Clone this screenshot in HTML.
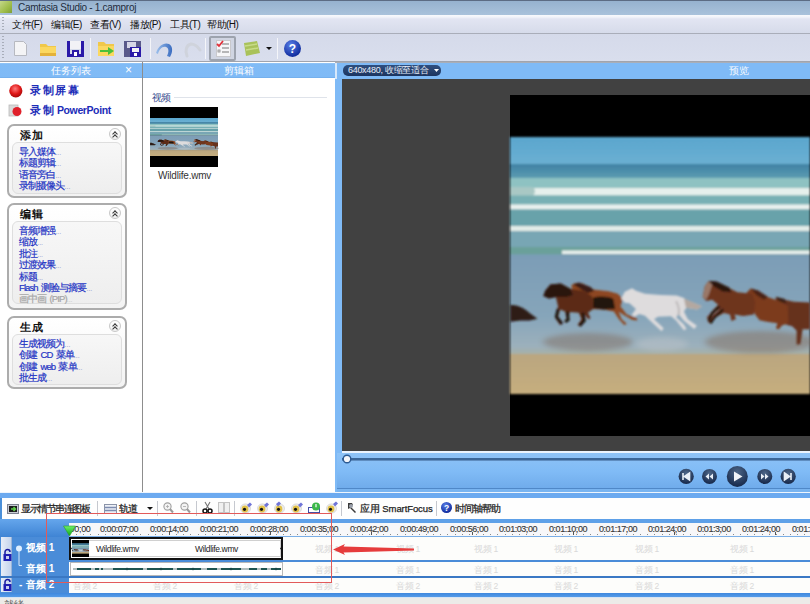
<!DOCTYPE html>
<html><head><meta charset="utf-8">
<style>
*{margin:0;padding:0;box-sizing:border-box}
html,body{width:810px;height:604px;overflow:hidden;background:#d9dde9;font-family:"Liberation Sans",sans-serif;font-size:11px;color:#000}
.a{position:absolute}
svg{position:absolute;overflow:visible}
#title{left:0;top:0;width:810px;height:15px;background:linear-gradient(#5c6c84 0,#5c6c84 1px,#96b2cf 1px,#a9c2db 15px);color:#1e2a3a;font-size:11px}
#menu{left:0;top:15px;width:810px;height:19px;background:linear-gradient(#f8f9fd 0,#f2f4fa 2px,#e2e5f2 4px,#d6dbea 18px);border-bottom:1px solid #a9adb9}
#menu span{position:absolute;top:3px;font-size:10px;color:#111;letter-spacing:-0.5px}
#tool{left:0;top:34px;width:810px;height:28px;background:linear-gradient(#d5daea,#d9deed);border-bottom:1px solid #a0a4ae}
.sep{position:absolute;top:4px;width:1px;height:21px;background:#a9adb8;border-right:1px solid #f4f5f9}
.hdr{position:absolute;top:1px;height:15px;background:linear-gradient(#9ccaf8 0,#80bbf6 1px,#7fbaf6 14px,#6aa6e4 15px);color:#fff;text-align:center;font-size:10px;line-height:15px}
#left{left:0;top:62px;width:143px;height:430px;background:#fff;border-right:1px solid #8d8d8d}
#clip{left:143px;top:62px;width:192px;height:430px;background:#fff}
#prev{left:335px;top:62px;width:475px;height:430px;background:#7fbaf6}
#dark{left:342px;top:79px;width:468px;height:372px;background:#414141}
#tl{left:0;top:492px;width:810px;height:105px;background:#4a8fd9}
.big{position:absolute;font-size:11px;font-weight:bold;color:#1c2cb8;letter-spacing:1.5px;line-height:13px}
.box{position:absolute;left:7px;width:120px;border:2px solid #acacac;border-radius:7px;background:linear-gradient(#fff,#f3f3f3)}
.bt{position:absolute;left:11px;top:3px;font-size:11px;font-weight:bold;letter-spacing:1px;color:#111;line-height:13px}
.btn{position:absolute;left:99.5px;top:2.3px;width:12px;height:12px;border-radius:50%;border:1px solid #c8c8c8;background:linear-gradient(#fff,#f0f0f0)}
.btn:after{content:"";position:absolute;left:3.3px;top:3px;width:3px;height:3px;border-left:1.3px solid #333;border-top:1.3px solid #333;transform:rotate(45deg)}
.btn:before{content:"";position:absolute;left:3.3px;top:5.5px;width:3px;height:3px;border-left:1.3px solid #333;border-top:1.3px solid #333;transform:rotate(45deg)}
.inner{position:absolute;left:3px;top:16px;width:110px;border:1px solid #dedede;border-radius:6px;background:linear-gradient(#f7f7f7,#eeeeee)}
.lk{position:absolute;left:6px;top:3px;font-size:9.5px;line-height:11.4px;color:#2434c4;white-space:nowrap;letter-spacing:-0.9px;word-spacing:1.5px;-webkit-text-stroke:0.2px #2434c4}
.lk i{font-style:normal;font-size:7px;letter-spacing:0;color:#8a92cc;-webkit-text-stroke:0;line-height:1px}
.ruler span{position:absolute;top:523px;font-size:9px;color:#3a3a3a;line-height:12px;letter-spacing:-0.45px;width:60px;text-align:center;-webkit-text-stroke:0.15px #3a3a3a}
.ph span{position:absolute;font-size:8.5px;color:#d9d9d9;line-height:11px;letter-spacing:-0.3px}
.trk{position:absolute;font-size:10px;font-weight:bold;color:#fff;line-height:12px;letter-spacing:0px}
.tt{position:absolute;top:502px;font-size:9.5px;letter-spacing:-0.9px;color:#222;line-height:13px;white-space:nowrap;-webkit-text-stroke:0.25px #222}
.tsep{position:absolute;top:501px;width:1px;height:15px;background:#c5c8cf}
#status{left:0;top:597px;width:810px;height:7px;background:#ecebe8;border-top:1px solid #d6e4f4}
</style></head><body>
<div id="title" class="a">
 <div class="a" style="left:0;top:1px;width:12px;height:12px;background:linear-gradient(135deg,#c5d88a,#9ebd4a 60%,#7f9e36)"></div>
 <div class="a" style="left:18px;top:2px;font-size:10px;letter-spacing:-0.3px;line-height:12px;color:#1f2c3c">Camtasia Studio - 1.camproj</div>
</div>
<div id="menu" class="a">
 <div class="a" style="left:2px;top:2px;width:2px;height:14px;background:repeating-linear-gradient(#a8adb9 0 1px,transparent 1px 3px)"></div>
 <span style="left:12px">文件(F)</span>
 <span style="left:51px">编辑(E)</span>
 <span style="left:90px">查看(V)</span>
 <span style="left:130px">播放(P)</span>
 <span style="left:170px">工具(T)</span>
 <span style="left:207px">帮助(H)</span>
</div>
<div id="tool" class="a">
 <div class="a" style="left:2px;top:2px;width:2px;height:23px;background:repeating-linear-gradient(#a8adb9 0 1px,transparent 1px 3px)"></div>
 <!-- new doc -->
 <svg style="left:13px;top:6px" width="15" height="17"><path d="M1.5 1.5h9l3 3v11h-12z" fill="#f4f4f6" stroke="#b7b9c0"/></svg>
 <!-- folder -->
 <svg style="left:39px;top:7px" width="18" height="16"><path d="M1 3h6l2 2h8v10H1z" fill="#f0c84a"/><path d="M1 6h16v9H1z" fill="#fbd860"/><path d="M1 12h16v3H1z" fill="#e4b23a"/></svg>
 <!-- save -->
 <svg style="left:67px;top:7px" width="17" height="16"><path d="M0 0h3v16H0zM14 0h3v16h-3zM0 13h17v3H0zM5 9h7v7H5z" fill="#2a1aa8"/><rect x="3" y="0" width="11" height="8" fill="#f2f2f6"/><rect x="7" y="11" width="3" height="4" fill="#fff"/></svg>
 <div class="sep" style="left:90px"></div>
 <!-- open arrow folder -->
 <svg style="left:97px;top:7px" width="19" height="16"><path d="M1 1h6l2 2h8v12H1z" fill="#f0c84a"/><path d="M1 5h16v10H1z" fill="#fbd860"/><path d="M3 9h8V6l6 4-6 4v-3H3z" fill="#4cc03a"/></svg>
 <!-- save as -->
 <svg style="left:124px;top:7px" width="18" height="17"><rect x="0" y="0" width="17" height="16" fill="#5a5a8a"/><rect x="3" y="1" width="9" height="6" fill="#d6d6e6"/><rect x="6" y="6" width="11" height="10" fill="#2a1aa8"/><rect x="8" y="7" width="7" height="4" fill="#f2f2f6"/><rect x="10" y="12" width="3" height="3" fill="#fff"/></svg>
 <div class="sep" style="left:150px"></div>
 <!-- undo -->
 <svg style="left:155px;top:8px" width="19" height="16"><defs><linearGradient id="ug" x1="0" y1="0" x2="1" y2="0"><stop offset="0" stop-color="#9cc0ec"/><stop offset="1" stop-color="#3a6cc0"/></linearGradient></defs><path d="M1 11C3 4 9 0 14 2c4 2 4 8 1 13l-3-1c2-4 2-8-1-9-4-1-7 3-8 7z" fill="url(#ug)"/></svg>
 <!-- redo gray -->
 <svg style="left:183px;top:8px" width="19" height="15"><path d="M4 14C2 9 3 3 8 2c4 0 7 3 9 6" fill="none" stroke="#cfd3dc" stroke-width="3" stroke-linecap="round"/></svg>
 <div class="sep" style="left:205px"></div>
 <!-- pressed checklist -->
 <div class="a" style="left:209px;top:2px;width:27px;height:25px;border:2px solid #9da3ae;border-radius:2px;background:#d0d5e2"></div>
 <svg style="left:216px;top:6px" width="15" height="17"><rect x="0.5" y="0.5" width="14" height="16" fill="#f6f6f8" stroke="#c8c8cc"/><path d="M6 4h7M6 8h7M6 12h7" stroke="#777" stroke-width="1"/><path d="M1 4l2 2 4-5" stroke="#e0303a" stroke-width="1.8" fill="none"/><rect x="2" y="10" width="2" height="2" fill="none" stroke="#888" stroke-width=".8"/></svg>
 <!-- green book -->
 <svg style="left:242px;top:7px" width="18" height="15"><path d="M2 2l13-2 3 12-14 3z" fill="#a9c25a"/><path d="M3 5l12-2M4 9l12-2" stroke="#c8dc88" stroke-width="1.5"/></svg>
 <svg style="left:266px;top:13px" width="7" height="4"><path d="M0 0h6l-3 3z" fill="#111"/></svg>
 <div class="sep" style="left:277px"></div>
 <!-- help -->
 <svg style="left:284px;top:6px" width="18" height="18"><defs><radialGradient id="hg" cx="40%" cy="30%" r="70%"><stop offset="0" stop-color="#5a7fe8"/><stop offset="1" stop-color="#0e2a9c"/></radialGradient></defs><circle cx="8.5" cy="8.5" r="8.5" fill="url(#hg)"/><text x="8.5" y="13" text-anchor="middle" font-family="Liberation Sans" font-weight="bold" font-size="12" fill="#fff">?</text></svg>
</div>
<div id="left" class="a"><div class="hdr" style="left:0;width:142px">任务列表<span class="a" style="left:125px;top:0;font-size:12px">×</span></div>
 <svg style="left:9px;top:22px" width="14" height="14"><defs><radialGradient id="rg" cx="45%" cy="35%" r="65%"><stop offset="0" stop-color="#ff7a7a"/><stop offset=".6" stop-color="#e01818"/><stop offset="1" stop-color="#a80808"/></radialGradient></defs><circle cx="6.8" cy="6.8" r="6.6" fill="url(#rg)"/></svg>
 <div class="big" style="left:30px;top:22px">录制屏幕</div>
 <svg style="left:8px;top:42px" width="15" height="13"><rect x="1" y="1" width="9" height="11" fill="#d9d9d9" stroke="#bbb" stroke-width=".8"/><circle cx="9" cy="7.5" r="4.5" fill="#e0202a"/></svg>
 <div class="big" style="left:30px;top:42px">录制<b class="a" style="left:27px;top:0;letter-spacing:-0.4px;font-size:10.5px">PowerPoint</b></div>
 <div class="box" style="top:62px;height:74px"><div class="bt">添加</div><div class="btn"></div>
  <div class="inner" style="height:52px"><div class="lk">导入媒体<i>...</i><br>标题剪辑<i>...</i><br>语音旁白<i>...</i><br>录制摄像头<i>...</i></div></div></div>
 <div class="box" style="top:141px;height:107px"><div class="bt">编辑</div><div class="btn"></div>
  <div class="inner" style="height:83px"><div class="lk">音频增强<i>...</i><br>缩放<i>...</i><br>批注<i>...</i><br>过渡效果<i>...</i><br>标题<i>...</i><br>Flash 测验与摘要<i>...</i><br><span style="color:#a6a6a6;-webkit-text-stroke:0.2px #a6a6a6">画中画 (PIP)<i style="color:#c8c8c8">...</i></span></div></div></div>
 <div class="box" style="top:254px;height:73px"><div class="bt">生成</div><div class="btn"></div>
  <div class="inner" style="height:51px"><div class="lk">生成视频为<i>...</i><br>创建 CD 菜单<i>...</i><br>创建 web 菜单<i>...</i><br>批生成<i>...</i></div></div></div>
</div>
<div id="clip" class="a"><div class="hdr" style="left:0;width:192px">剪辑箱</div>
 <div class="a" style="left:9px;top:30px;font-size:10px;color:#3b4f8f;line-height:12px;letter-spacing:-1px">视频</div>
 <div class="a" style="left:31px;top:35px;width:153px;height:1px;background:#dfe3ea"></div>
 <div class="a" style="left:7px;top:45px;width:68px;height:60px;background:#000"></div><svg style="left:7px;top:56px" width="68" height="38" viewBox="0 0 300 257" preserveAspectRatio="none"><use href="#vid"/></svg>
 <div class="a" style="left:15px;top:108px;font-size:10px;color:#333;line-height:12px;letter-spacing:-0.2px">Wildlife.wmv</div>
</div>
<div id="prev" class="a">
 <div class="a" style="left:0;top:0;width:475px;height:1px;background:#a9aeb8"></div>
 <div class="a" style="left:0;top:1px;width:2px;height:16px;background:#d6e8fb"></div>
 <div class="a" style="left:8px;top:3px;width:98px;height:11px;border-radius:5px;background:linear-gradient(#2f4f7f,#1c3560);color:#e8eef8;font-size:9px;line-height:11px;padding-left:5px;white-space:nowrap;letter-spacing:-0.3px">640x480, 收缩至适合</div>
 <svg style="left:99px;top:7px" width="5" height="3"><path d="M0 0h5l-2.5 3z" fill="#fff"/></svg>
 <div class="a" style="left:394px;top:2px;font-size:10px;color:#f2f8ff;line-height:13px">预览</div>
 <!-- control bar -->
 <div class="a" style="left:7px;top:389px;width:468px;height:2px;background:#eaf3fd"></div>
 <div class="a" style="left:2px;top:391px;width:473px;height:37px;background:linear-gradient(#8ec3f7,#80bbf6 50%,#6eaaea)"></div>
 <div class="a" style="left:7px;top:396px;width:468px;height:2px;background:#3a6698"></div>
 <div class="a" style="left:7px;top:398px;width:468px;height:1px;background:#5f8dc0"></div>
 <svg style="left:7px;top:392px" width="12" height="12"><circle cx="5" cy="5" r="3.8" fill="#f4f6fa" stroke="#2c5a92" stroke-width="1.4"/></svg>
 <div class="a" style="left:2px;top:426px;width:473px;height:1px;background:#4f88c8"></div>
 <div class="a" style="left:2px;top:427px;width:473px;height:3px;background:#79b4f0"></div>
 <svg style="left:335px;top:403px" width="140" height="24"><defs><radialGradient id="bg1" cx="50%" cy="30%" r="70%"><stop offset="0" stop-color="#4d6688"/><stop offset="1" stop-color="#16284a"/></radialGradient></defs>
  <circle cx="16.2" cy="11.4" r="7.6" fill="url(#bg1)"/><path d="M13 8v7M14.5 11.5l5-3.5v7z" stroke="#e8eef6" stroke-width="1.6" fill="#e8eef6"/>
  <circle cx="39.5" cy="11.4" r="7.5" fill="url(#bg1)"/><path d="M35.5 11.4l3.5-3v6zM39.5 11.4l3.5-3v6z" fill="#e8eef6"/>
  <circle cx="67.3" cy="11.4" r="10.5" fill="url(#bg1)"/><path d="M64 6.5l8.5 5-8.5 5z" fill="#f2f4f8"/>
  <circle cx="94.8" cy="11.4" r="7.5" fill="url(#bg1)"/><path d="M91 8.4l3.5 3-3.5 3zM95 8.4l3.5 3-3.5 3z" fill="#e8eef6"/>
  <circle cx="118.2" cy="11.4" r="7.6" fill="url(#bg1)"/><path d="M114.5 8l5 3.5-5 3.5zM121 8v7" stroke="#e8eef6" stroke-width="1.6" fill="#e8eef6"/>
 </svg>
</div>
<div id="dark" class="a"></div>
<svg style="left:510px;top:95px" width="300" height="341"><rect width="300" height="341" fill="#000"/><svg x="0" y="42" width="300" height="257" viewBox="0 0 300 257"><use href="#vid"/></svg></svg>
<svg width="0" height="0" style="left:0;top:0"><defs>
 <linearGradient id="sky" x1="0" y1="0" x2="0" y2="1"><stop offset="0" stop-color="#5aa6ce"/><stop offset="1" stop-color="#6cb0d2"/></linearGradient><linearGradient id="hz" x1="0" y1="0" x2="0" y2="1"><stop offset="0" stop-color="#3f80a4"/><stop offset="1" stop-color="#5e9eb2"/></linearGradient>
 <linearGradient id="sea" x1="0" y1="0" x2="0" y2="1"><stop offset="0" stop-color="#4a87a4"/><stop offset=".2" stop-color="#8fc2c2"/><stop offset=".5" stop-color="#76aeb2"/><stop offset="1" stop-color="#6fa0ac"/></linearGradient>
 <linearGradient id="wet" x1="0" y1="0" x2="0" y2="1"><stop offset="0" stop-color="#7c9db6"/><stop offset=".6" stop-color="#86a5ba"/><stop offset=".9" stop-color="#9cb0bc"/><stop offset="1" stop-color="#aab0a0"/></linearGradient>
 <linearGradient id="sand" x1="0" y1="0" x2="0" y2="1"><stop offset="0" stop-color="#baa680"/><stop offset="1" stop-color="#c6ae7e"/></linearGradient>
 <filter id="soft" x="-5%" y="-5%" width="110%" height="110%"><feGaussianBlur stdDeviation="0.9"/></filter>
 <filter id="soft2" x="-50%" y="-100%" width="200%" height="300%"><feGaussianBlur stdDeviation="3 2.5"/></filter>
 <g id="vid"><g filter="url(#soft)">
  <rect x="0" y="0" width="300" height="28" fill="url(#sky)"/>
  <rect x="0" y="27" width="300" height="91" fill="url(#sea)"/>
  <rect x="0" y="27" width="300" height="15" fill="url(#hz)"/>
  <rect x="0" y="41" width="300" height="9" fill="#8ec2c2"/>
  <path d="M0 51h300v7.5H0z" fill="#e6f0ec"/><path d="M0 50h22c4 2 4 6 0 9.5H0z" fill="#a9c8c4"/>
  <rect x="0" y="58.5" width="300" height="8.5" fill="#78b0b4"/>
  <path d="M0 67.5h300v5H0z" fill="#eaf1ee"/>
  <rect x="0" y="72.5" width="300" height="16" fill="#68a2aa"/>
  <path d="M0 89h300v5H0z" fill="#e2ece8"/>
  <rect x="0" y="94" width="300" height="16" fill="#78a6b4"/>
  <rect x="0" y="110" width="300" height="7.5" fill="#6aa09a"/>
  <path d="M52 113.5h248v3.5H52z" fill="#eaf1ee"/>
  <rect x="0" y="117.5" width="300" height="102" fill="url(#wet)"/>
  <rect x="0" y="217" width="300" height="40" fill="url(#sand)"/>
 </g>
 <g filter="url(#soft2)" opacity=".4">
  <ellipse cx="78" cy="205" rx="45" ry="9" fill="#7a6050"/><ellipse cx="152" cy="207" rx="26" ry="7" fill="#c4c8cc"/><ellipse cx="250" cy="205" rx="55" ry="11" fill="#7e5e48"/>
 </g>
 <g filter="url(#soft)">
  <!-- partial left horse -->
  <g transform="translate(-5 133) scale(0.25927)">
   <path d="M20 135C50 132 80 150 100 170L125 188 95 195 60 195 20 200z" fill="#2e1c14"/>
   <!-- chestnut behind -->
   <path d="M255 60L270 50 300 52 340 75 400 82 435 92 455 112 445 140 470 172 508 185 510 195 490 192 455 172 438 160 450 190 470 208 460 212 438 188 420 160 380 152 330 150 300 140 270 100z" fill="#8e4620"/>
   <path d="M262 56L285 48 330 66 345 80 320 90 290 72z" fill="#3a1e12"/>
   <path d="M338 108C360 100 400 100 418 112L425 150 380 152 340 148z" fill="#24140c"/>
   <!-- bay front -->
   <path d="M148 100L155 80 175 56 215 52 252 72 300 80 335 100 340 150 320 165 330 185 322 190 300 165 310 195 290 218 280 212 295 190 285 165 250 162 245 192 238 202 228 198 238 188 232 160 212 152 205 180 222 205 212 212 192 182 205 142 196 104 170 110z" fill="#5c2a16"/>
   <path d="M148 100L155 80 175 56 215 52 252 72 262 96 238 104 198 104 170 110z" fill="#2c1610"/>
   <path d="M205 150L198 180 220 208M240 160L244 192 232 200M300 165L306 195 288 215" stroke="#1e120c" stroke-width="11" fill="none"/>
   <!-- white horse -->
   <path d="M448 110L462 84 490 70 505 80 540 92 600 96 662 98 690 108 700 116 760 140 740 152 700 146 690 160 705 190 740 215 730 228 690 196 670 172 660 182 690 210 700 228 690 232 660 195 640 178 590 180 575 190 612 225 604 236 560 196 540 176 518 170 500 180 488 174 505 150 480 128 462 126z" fill="#dedcdd"/>
   <path d="M690 110L760 140 742 152 698 146z" fill="#b4a8a0"/>
   <path d="M660 120C670 140 675 160 668 175" stroke="#a8a4a4" stroke-width="8" fill="none" opacity=".6"/>
  </g>
  <g transform="translate(180 133) scale(0.148148)">
   <!-- horse C -->
   <path d="M575 185L640 200 700 215 810 220 810 400 760 400 745 500 720 505 720 410 690 380 650 370z" fill="#66301c"/>
   <path d="M580 180L640 195 650 225 600 215z" fill="#3a2016"/>
   <!-- horse B -->
   <path d="M360 210L385 150 410 125 460 140 520 180 600 210 660 240 665 360 620 375 600 400 580 395 590 360 520 350 470 340 440 300 410 240 380 232z" fill="#7c3a1a"/>
   <path d="M410 125L460 138 525 180 500 200 450 170z" fill="#4a2414"/>
   <!-- horse A -->
   <path d="M85 182L100 110 125 75 180 80 260 120 320 150 420 160 440 220 430 300 360 310 300 300 310 330 280 345 270 300 230 290 170 320 135 360 120 350 160 300 210 260 175 280 125 330 110 325 160 265 190 235 150 200 110 210z" fill="#6e341c"/>
   <path d="M85 182L100 110 125 75 150 100 130 160 110 200z" fill="#9a7868"/>
   <path d="M125 75L180 78 265 118 280 150 220 145 160 110z" fill="#2a1610"/>
   <path d="M200 245L150 290 125 345M225 265L165 320 138 360" stroke="#1e1410" stroke-width="16" fill="none"/>
  </g>
</g>
 </g>
</defs></svg>
<div id="tl" class="a">
 <div class="a" style="left:0;top:0;width:810px;height:1px;background:#eef5fd"></div>
 <div class="a" style="left:0;top:1px;width:810px;height:5px;background:#6caaf0"></div>
 <div class="a" style="left:2px;top:6px;width:808px;height:21px;background:#fefefe"></div>
 <div class="a" style="left:0;top:27px;width:69px;height:18px;background:linear-gradient(#65a6ec,#3f84d4)"></div>
 <div class="a" style="left:69px;top:27px;width:741px;height:4px;background:#5ea0e8"></div>
 <div class="a" style="left:0;top:45px;width:69px;height:60px;background:#4a8cd8"></div>
 <div class="a" style="left:69px;top:104px;width:741px;height:0"></div>
</div>
<div class="a" style="left:69px;top:523px;width:741px;height:14px;background:#f7f7f9;border-bottom:1px solid #7aaee6"></div>
<div class="a" style="left:69px;top:534px;width:741px;height:1px;background:repeating-linear-gradient(90deg,#8a8a8a 0 1px,transparent 1px 7.14px)"></div>
<div class="a" style="left:69px;top:532px;width:741px;height:3px;background:repeating-linear-gradient(90deg,transparent 0 49.5px,#555 49.5px 50.5px)"></div>
<!-- timeline toolbar -->
<svg style="left:7px;top:504px" width="12" height="10"><rect x="0.5" y="0.5" width="11" height="9" fill="#c9ccd4" stroke="#7d8190" stroke-width="1"/><rect x="2" y="2" width="8" height="6" fill="#1c1c1c"/><path d="M4 5h4M6.5 3l2 2-2 2" stroke="#5ed04a" stroke-width="1.5" fill="none"/></svg>
<div class="tt" style="left:21px;letter-spacing:-1.5px">显示情节串连图板</div>
<div class="tsep" style="left:97px"></div>
<svg style="left:104px;top:504px" width="13" height="10"><rect x="0.5" y="0.5" width="12" height="9" fill="#eef1f7" stroke="#8a93a8"/><path d="M1 3.5h11M1 6.5h11" stroke="#7d8cb0" stroke-width="1.4"/></svg>
<div class="tt" style="left:119px">轨道</div>
<svg style="left:147px;top:507px" width="7" height="4"><path d="M0 0h6l-3 3z" fill="#111"/></svg>
<div class="tsep" style="left:157px"></div>
<svg style="left:163px;top:502px" width="11" height="12"><circle cx="4.5" cy="4.5" r="3.6" fill="#f4f4f4" stroke="#a0a0a0" stroke-width="1.1"/><path d="M7 7l3 3.5" stroke="#9a9a9a" stroke-width="2"/><path d="M3 4.5h3M4.5 3v3" stroke="#a8a8a8" stroke-width=".8"/></svg>
<svg style="left:180px;top:502px" width="11" height="12"><circle cx="4.5" cy="4.5" r="3.6" fill="#f4f4f4" stroke="#a0a0a0" stroke-width="1.1"/><path d="M7 7l3 3.5" stroke="#9a9a9a" stroke-width="2"/><path d="M3 4.5h3" stroke="#a8a8a8" stroke-width=".8"/></svg>
<div class="tsep" style="left:196px"></div>
<svg style="left:202px;top:501px" width="11" height="13"><path d="M3 1l4 7M8 1L4 8" stroke="#777" stroke-width="1.1"/><circle cx="3" cy="10" r="2" fill="none" stroke="#111" stroke-width="1.5"/><circle cx="8" cy="10" r="2" fill="none" stroke="#111" stroke-width="1.5"/></svg>
<svg style="left:218px;top:502px" width="12" height="11"><rect x="0.5" y="0.5" width="5" height="10" fill="#f0f0f0" stroke="#c4c4c4"/><rect x="6.5" y="0.5" width="5" height="10" fill="#f0f0f0" stroke="#c4c4c4"/></svg>
<div class="tsep" style="left:234px"></div>
<svg style="left:240px;top:502px" width="13" height="12"><ellipse cx="5.5" cy="6.5" rx="5" ry="4.6" fill="#ececec" stroke="#c8c8c8" stroke-width=".6"/><circle cx="5" cy="7" r="3.4" fill="#e2c24a"/><circle cx="4.5" cy="7.3" r="1.6" fill="#111"/><path d="M7 3l3-2.5 2 2-3 3z" fill="#6f74d8"/></svg><svg style="left:257px;top:502px" width="13" height="12"><ellipse cx="5.5" cy="6.5" rx="5" ry="4.6" fill="#ececec" stroke="#c8c8c8" stroke-width=".6"/><circle cx="5" cy="7" r="3.4" fill="#e2c24a"/><circle cx="4.5" cy="7.3" r="1.6" fill="#111"/><path d="M7 3l3-2.5 2 2-3 3z" fill="#6f74d8"/></svg><svg style="left:274px;top:502px" width="13" height="12"><ellipse cx="5.5" cy="6.5" rx="5" ry="4.6" fill="#ececec" stroke="#c8c8c8" stroke-width=".6"/><circle cx="5" cy="7" r="3.4" fill="#e2c24a"/><circle cx="4.5" cy="7.3" r="1.6" fill="#111"/><path d="M2 2l3-2.5 2 2-3 3z" fill="#6f74d8"/></svg><svg style="left:291px;top:502px" width="13" height="12"><ellipse cx="5.5" cy="6.5" rx="5" ry="4.6" fill="#ececec" stroke="#c8c8c8" stroke-width=".6"/><circle cx="5" cy="7" r="3.4" fill="#e2c24a"/><circle cx="4.5" cy="7.3" r="1.6" fill="#111"/><path d="M7 3l3-2.5 2 2-3 3z" fill="#6f74d8"/></svg>
<svg style="left:308px;top:502px" width="13" height="12"><rect x="0.5" y="5.5" width="11" height="5.5" fill="#fff" stroke="#4250a8"/><path d="M0.5 11h11" stroke="#2a3090" stroke-width="1.5"/><circle cx="8" cy="4.5" r="4" fill="#3cb84a"/><path d="M8 2v3.3" stroke="#fff" stroke-width="1.2"/></svg>
<svg style="left:326px;top:502px" width="13" height="12"><ellipse cx="5.5" cy="6.5" rx="5" ry="4.6" fill="#ececec" stroke="#c8c8c8" stroke-width=".6"/><circle cx="5" cy="7" r="3.4" fill="#e2c24a"/><circle cx="4.5" cy="7.3" r="1.6" fill="#111"/><path d="M7 2l3-2.5 2 2-3 3z" fill="#6f74d8"/></svg>
<div class="tsep" style="left:341px"></div>
<svg style="left:347px;top:502px" width="11" height="11"><path d="M1 1h4l1 2-2 2 5 5-1 1-5-5-2 1z" fill="#3a3a3a"/><circle cx="4" cy="4" r="2" fill="#9aa0aa"/></svg>
<div class="tt" style="left:360px;letter-spacing:-0.1px;font-size:9.5px">应用 SmartFocus</div>
<div class="tsep" style="left:436px"></div>
<svg style="left:441px;top:502px" width="12" height="12"><defs><radialGradient id="hg2" cx="40%" cy="30%" r="70%"><stop offset="0" stop-color="#5a7fe8"/><stop offset="1" stop-color="#0e2a9c"/></radialGradient></defs><circle cx="5.5" cy="5.5" r="5.5" fill="url(#hg2)"/><text x="5.5" y="9" text-anchor="middle" font-family="Liberation Sans" font-weight="bold" font-size="8.5" fill="#fff">?</text></svg>
<div class="tt" style="left:455px">时间轴帮助</div>
<div class="a" style="left:69px;top:523px;width:30px;height:12px;overflow:hidden"><span class="a" style="left:-18px;top:1px;font-size:9px;color:#222;line-height:11px;letter-spacing:-0.3px">0:00:00;00</span></div><div class="ruler"><span style="left:89px">0:00:07;00</span><span style="left:139px">0:00:14;00</span><span style="left:189px">0:00:21;00</span><span style="left:239px">0:00:28;00</span><span style="left:289px">0:00:35;00</span><span style="left:339px">0:00:42;00</span><span style="left:389px">0:00:49;00</span><span style="left:439px">0:00:56;00</span><span style="left:488px">0:01:03;00</span><span style="left:538px">0:01:10;00</span><span style="left:588px">0:01:17;00</span><span style="left:637px">0:01:24;00</span><span style="left:684px">0:01:3;00</span><span style="left:731px">0:01:24;00</span><span style="left:781px">0:01:31;00</span></div>
<svg style="left:63px;top:525px" width="14" height="12"><defs><linearGradient id="gtri" x1="0" y1="0" x2="0" y2="1"><stop offset="0" stop-color="#6ef06a"/><stop offset="1" stop-color="#0aa814"/></linearGradient></defs><path d="M0.5 1h12l-6 10z" fill="url(#gtri)" stroke="#2a9a2a" stroke-width=".6"/></svg>
<div class="a" style="left:69px;top:537px;width:741px;height:23px;background:#fdfdfb"></div>
<div class="a" style="left:69px;top:560px;width:741px;height:2px;background:#4a8cd8"></div>
<div class="a" style="left:69px;top:562px;width:741px;height:14px;background:#fdfdfb"></div>
<div class="a" style="left:0;top:576px;width:810px;height:2px;background:#3a78c4"></div>
<div class="a" style="left:69px;top:578px;width:741px;height:15px;background:#fdfdfb"></div>
<div class="a" style="left:0;top:593px;width:810px;height:5px;background:linear-gradient(#3f88de,#5aa0ea)"></div>
<div class="ph"><span style="left:315px;top:544px">视频 1</span><span style="left:315px;top:565px">音频 1</span><span style="left:315px;top:581px">音频 2</span><span style="left:396px;top:544px">视频 1</span><span style="left:396px;top:565px">音频 1</span><span style="left:396px;top:581px">音频 2</span><span style="left:474px;top:544px">视频 1</span><span style="left:474px;top:565px">音频 1</span><span style="left:474px;top:581px">音频 2</span><span style="left:554px;top:544px">视频 1</span><span style="left:554px;top:565px">音频 1</span><span style="left:554px;top:581px">音频 2</span><span style="left:635px;top:544px">视频 1</span><span style="left:635px;top:565px">音频 1</span><span style="left:635px;top:581px">音频 2</span><span style="left:730px;top:544px">视频 1</span><span style="left:730px;top:565px">音频 1</span><span style="left:730px;top:581px">音频 2</span><span style="left:234px;top:581px">音频 2</span><span style="left:153px;top:581px">音频 2</span><span style="left:73px;top:581px">音频 2</span></div>
<!-- lock buttons -->
<div class="a" style="left:1px;top:537px;width:11px;height:39px;background:linear-gradient(90deg,#e8eef8,#c4d4ec);border-right:1px solid #9ab4d8"></div>
<div class="a" style="left:1px;top:578px;width:11px;height:14px;background:linear-gradient(90deg,#e8eef8,#c4d4ec);border-right:1px solid #9ab4d8"></div>
<svg style="left:3px;top:549px" width="9" height="13"><path d="M2 5V3a2.5 2.5 0 0 1 5 0" fill="none" stroke="#1a1aa0" stroke-width="1.5"/><rect x="0.5" y="5" width="8" height="7" fill="#1e1eb0"/><rect x="3" y="7" width="3" height="3" fill="#c8d0ee"/></svg>
<svg style="left:3px;top:579px" width="9" height="13"><path d="M2 5V3a2.5 2.5 0 0 1 5 0" fill="none" stroke="#1a1aa0" stroke-width="1.5"/><rect x="0.5" y="5" width="8" height="7" fill="#1e1eb0"/><rect x="3" y="7" width="3" height="3" fill="#c8d0ee"/></svg>
<svg style="left:14px;top:544px" width="12" height="26"><circle cx="5" cy="4.5" r="3" fill="#dfefff"/><path d="M5 7v14.5h3" stroke="#d8e8fa" stroke-width="1" fill="none"/></svg>
<div class="trk" style="left:26px;top:542px">视频 1</div>
<div class="trk" style="left:26px;top:563px">音频 1</div>
<div class="trk" style="left:19px;top:579px">-</div><div class="trk" style="left:26px;top:579px">音频 2</div>
<!-- clips -->
<div class="a" style="left:69px;top:537px;width:214px;height:23px;border:2px solid #111;background:#fff"></div>
<div class="a" style="left:72px;top:540px;width:209px;height:17px;border:1px solid #d0d0d0"></div><svg style="left:280px;top:545px" width="4" height="7"><path d="M3 0v7L0 3.5z" fill="#111"/></svg><svg style="left:69px;top:545px" width="4" height="7"><path d="M0 0v7l3-3.5z" fill="#111"/></svg>
<svg style="left:72px;top:540px" width="17" height="17" viewBox="0 0 300 300" preserveAspectRatio="none"><rect width="300" height="300" fill="#000"/><svg y="60" width="300" height="180" viewBox="0 0 300 257" preserveAspectRatio="none"><use href="#vid"/></svg></svg>
<div class="a" style="left:96px;top:543px;font-size:8.5px;color:#222;line-height:12px;letter-spacing:-0.35px">Wildlife.wmv</div>
<div class="a" style="left:195px;top:543px;font-size:8.5px;color:#222;line-height:12px;letter-spacing:-0.35px">Wildlife.wmv</div>
<div class="a" style="left:70px;top:562px;width:213px;height:14px;border:1px solid #b8b8b8;background:#fff"></div>
<svg style="left:71px;top:563px" width="211" height="12"><path d="M2 6H210" stroke="#3a5a5a" stroke-width=".8"/><path d="M6 6h14M24 6h4M30 6h2M42 6h30M76 6h26M106 6h24M136 6h10M150 6h20M178 6h8M190 6h6M200 6h10" stroke="#1e5450" stroke-width="1.8"/><g fill="#1a4848"><circle cx="56" cy="6" r="1.3"/><circle cx="90" cy="6" r="1.3"/><circle cx="122" cy="6" r="1.3"/><circle cx="160" cy="6" r="1.3"/><circle cx="205" cy="6" r="1.3"/></g></svg>
<!-- red annotations -->
<div class="a" style="left:46px;top:513px;width:286px;height:70px;border:1px solid #e25a5a"></div>
<svg style="left:332px;top:543px" width="84" height="13"><path d="M1 6.5L13 1 11.5 3.6 82 5.6 82 7.6 11.5 9.6 13 12z" fill="#e63c3c"/></svg>
<div id="status" class="a"><span class="a" style="left:4px;top:1px;font-size:10px;color:#555;line-height:12px">就绪</span></div>
</body></html>
